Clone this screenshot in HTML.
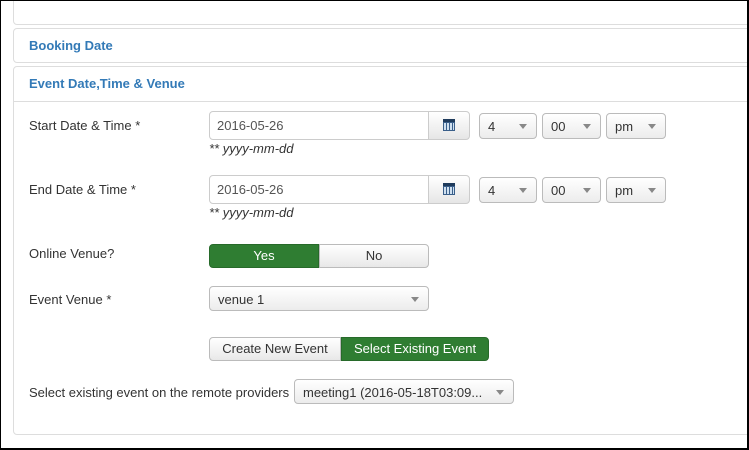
<!DOCTYPE html>
<html><head><meta charset="utf-8"><style>
*{box-sizing:border-box;margin:0;padding:0}
html,body{width:749px;height:450px;overflow:hidden;background:#fff;font-family:"Liberation Sans",sans-serif;font-size:13px;color:#333}
.frame{position:absolute;left:0;top:0;width:749px;height:450px;border-left:1px solid #000;border-top:1px solid #000;border-right:2px solid #000;border-bottom:2px solid #000;pointer-events:none;z-index:10}
.panel{position:absolute;left:13px;width:760px;border:1px solid #ddd;border-radius:4px;background:#fff}
.ph{position:absolute;left:29px;font-weight:bold;color:#337ab7;font-size:13px}
.lbl{position:absolute;left:29px;font-size:13px;color:#333}
.inp{position:absolute;height:29px;border:1px solid #ccc;border-radius:4px 0 0 4px;padding:6px 7px;font-size:13px;color:#555;background:#fff}
.cal{position:absolute;width:42px;height:29px;border:1px solid #ccc;border-radius:0 4px 4px 0;background:linear-gradient(#fff,#e6e6e6)}
.cal i{position:absolute;left:14px;top:7px;width:12px;height:12px;background:#3a5f8a;border-top:3px solid #1f3b5c}
.cal i:after{content:"";position:absolute;left:1px;top:1px;width:10px;height:7px;background:repeating-linear-gradient(90deg,#cfe0f0 0 2px,#3a5f8a 2px 3px)}
.sel{position:absolute;height:26px;border:1px solid #bbb;border-radius:4px;background:linear-gradient(#fff,#ececec);padding:5px 8px;font-size:13px;color:#333}
.sel:after{content:"";position:absolute;right:9px;top:10px;border-left:4px solid transparent;border-right:4px solid transparent;border-top:5px solid #888}
.hint{position:absolute;left:209px;font-size:13px;font-style:italic;color:#333}
.btn{position:absolute;height:24px;font-size:13px;text-align:center;line-height:22px;border:1px solid #bbb;background:linear-gradient(#fff,#e8e8e8);color:#333}
.g{background:#2f7d32;border-color:#276a2a;color:#fff}
</style></head><body>
<div class="frame"></div>
<div class="panel" style="top:-5px;height:30px"></div>
<div class="panel" style="top:28px;height:35px"></div>
<div class="ph" style="top:38px">Booking Date</div>
<div class="panel" style="top:66px;height:369px"></div>
<div style="position:absolute;left:14px;top:101px;width:740px;border-top:1px solid #ddd"></div>
<div class="ph" style="top:76px">Event Date,Time &amp; Venue</div>

<div class="lbl" style="top:118px">Start Date &amp; Time *</div>
<div class="inp" style="left:209px;top:111px;width:220px">2016-05-26</div>
<div class="cal" style="left:428px;top:111px"><i></i></div>
<div class="sel" style="left:479px;top:113px;width:58px">4</div>
<div class="sel" style="left:542px;top:113px;width:59px">00</div>
<div class="sel" style="left:606px;top:113px;width:60px">pm</div>
<div class="hint" style="top:141px">** yyyy-mm-dd</div>

<div class="lbl" style="top:182px">End Date &amp; Time *</div>
<div class="inp" style="left:209px;top:175px;width:220px">2016-05-26</div>
<div class="cal" style="left:428px;top:175px"><i></i></div>
<div class="sel" style="left:479px;top:177px;width:58px">4</div>
<div class="sel" style="left:542px;top:177px;width:59px">00</div>
<div class="sel" style="left:606px;top:177px;width:60px">pm</div>
<div class="hint" style="top:205px">** yyyy-mm-dd</div>

<div class="lbl" style="top:246px">Online Venue?</div>
<div class="btn g" style="left:209px;top:244px;width:110px;border-radius:4px 0 0 4px">Yes</div>
<div class="btn" style="left:319px;top:244px;width:110px;border-radius:0 4px 4px 0">No</div>

<div class="lbl" style="top:292px">Event Venue *</div>
<div class="sel" style="left:209px;top:286px;width:220px;height:25px">venue 1</div>

<div class="btn" style="left:209px;top:337px;width:132px;border-radius:4px 0 0 4px">Create New Event</div>
<div class="btn g" style="left:341px;top:337px;width:148px;border-radius:0 4px 4px 0">Select Existing Event</div>

<div class="lbl" style="top:385px">Select existing event on the remote providers</div>
<div class="sel" style="left:294px;top:379px;width:220px;height:25px">meeting1 (2016-05-18T03:09...</div>
</body></html>
